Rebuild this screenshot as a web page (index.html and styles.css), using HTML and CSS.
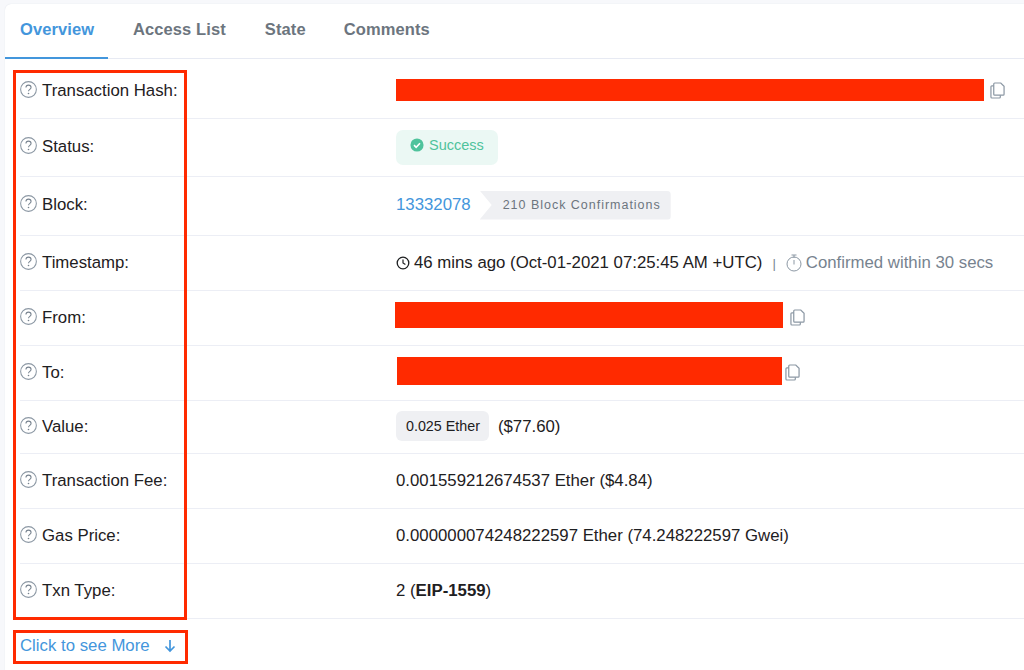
FILE: index.html
```html
<!DOCTYPE html>
<html lang="en">
<head>
<meta charset="utf-8">
<title>Transaction Details</title>
<link rel="stylesheet" href="styles.css">
</head>
<body>
<svg class="defs" width="0" height="0" aria-hidden="true">
  <symbol id="q" viewBox="0 0 16 16">
    <circle cx="8" cy="8" r="7.4" fill="none" stroke="#8c98a4" stroke-width="1"/>
    <path d="M5.6 6.2C5.6 4.8 6.7 3.9 8 3.9s2.4.9 2.4 2.2c0 1.8-2.4 1.8-2.4 3.6" fill="none" stroke="#77838f" stroke-width="1"/>
    <circle cx="8" cy="11.8" r=".75" fill="#77838f"/>
  </symbol>
  <symbol id="copy" viewBox="0 0 16 18">
    <path d="M5 1h6.5L15 4.5V13a1 1 0 0 1-1 1H5a1 1 0 0 1-1-1V2a1 1 0 0 1 1-1Z" fill="none" stroke="#8c98a4" stroke-width="1.3"/>
    <path d="M4 4H2a1 1 0 0 0-1 1v11a1 1 0 0 0 1 1h8a1 1 0 0 0 1-1v-2" fill="none" stroke="#8c98a4" stroke-width="1.3"/>
  </symbol>
</svg>
<main class="card">
  <nav class="tabs">
    <a class="tab active">Overview</a>
    <a class="tab">Access List</a>
    <a class="tab">State</a>
    <a class="tab">Comments</a>
  </nav>
  <section class="rows">
    <div class="row row-hash">
      <div class="label"><svg class="q"><use href="#q"/></svg>Transaction Hash:</div>
      <div class="value"><span class="redact w-hash"></span><svg class="copy c-hash"><use href="#copy"/></svg></div>
    </div>
    <div class="row r58">
      <div class="label"><svg class="q"><use href="#q"/></svg>Status:</div>
      <div class="value"><span class="status">
        <svg class="check" viewBox="0 0 16 16"><circle cx="8" cy="8" r="7.5" fill="#4fc39c"/><path d="M4.6 8.2l2.4 2.4 4.4-4.6" fill="none" stroke="#fff" stroke-width="1.8"/></svg>Success</span></div>
    </div>
    <div class="row r59">
      <div class="label"><svg class="q"><use href="#q"/></svg>Block:</div>
      <div class="value"><a class="link">13332078</a><span class="confirm">210 Block Confirmations</span></div>
    </div>
    <div class="row">
      <div class="label"><svg class="q"><use href="#q"/></svg>Timestamp:</div>
      <div class="value"><svg class="clock" viewBox="0 0 14 14"><circle cx="7" cy="7" r="5.8" fill="none" stroke="#1e2022" stroke-width="1.3"/><path d="M7 3.6V7l2.4 1.6" fill="none" stroke="#1e2022" stroke-width="1.2"/></svg><span>46 mins ago (Oct-01-2021 07:25:45 AM +UTC)</span><span class="sep">|</span><svg class="timer" viewBox="0 0 16 18"><circle cx="8" cy="10" r="7" fill="none" stroke="#8c98a4" stroke-width="1"/><path d="M5.5 1h5M8 1v3M8 6v4.5" fill="none" stroke="#8c98a4" stroke-width="1"/></svg><span class="muted">Confirmed within 30 secs</span></div>
    </div>
    <div class="row">
      <div class="label"><svg class="q"><use href="#q"/></svg>From:</div>
      <div class="value"><span class="redact w-from"></span><svg class="copy c-row"><use href="#copy"/></svg></div>
    </div>
    <div class="row">
      <div class="label"><svg class="q"><use href="#q"/></svg>To:</div>
      <div class="value"><span class="redact w-to"></span><svg class="copy c-to"><use href="#copy"/></svg></div>
    </div>
    <div class="row r53">
      <div class="label"><svg class="q"><use href="#q"/></svg>Value:</div>
      <div class="value"><span class="ether">0.025 Ether</span><span>($77.60)</span></div>
    </div>
    <div class="row">
      <div class="label"><svg class="q"><use href="#q"/></svg>Transaction Fee:</div>
      <div class="value">0.001559212674537 Ether ($4.84)</div>
    </div>
    <div class="row">
      <div class="label"><svg class="q"><use href="#q"/></svg>Gas Price:</div>
      <div class="value">0.000000074248222597 Ether (74.248222597 Gwei)</div>
    </div>
    <div class="row">
      <div class="label"><svg class="q"><use href="#q"/></svg>Txn Type:</div>
      <div class="value"><span>2 (<b>EIP-1559</b>)</span></div>
    </div>
  </section>
  <a class="more">Click to see More<svg class="arrow" viewBox="0 0 12 14"><path d="M6 1v11M1.5 7.5 6 12l4.5-4.5" fill="none" stroke="#4396dc" stroke-width="1.7"/></svg></a>
</main>
<div class="mark mark-rows"></div>
<div class="mark mark-more"></div>
</body>
</html>
```
FILE: styles.css
```css
* { box-sizing: border-box; }
html, body { margin: 0; height: 670px; overflow: hidden; }
body {
  position: relative;
  background: #f7f8fb;
  padding: 4px 0 0 5px;
  font-family: "Liberation Sans", Arial, sans-serif;
  font-size: 16.8px;
  color: #1e2022;
}
.defs { position: absolute; }
.card {
  background: #fff;
  border-radius: 6px 0 0 0;
  height: 666px;
  display: flex;
  flex-direction: column;
  box-shadow: 0 0 1px #d5dae2;
}
.tabs {
  display: flex;
  height: 55px;
  flex: none;
  border-bottom: 1px solid #e7eaf3;
  font-weight: 700;
  font-size: 16.5px;
  color: #6c757e;
}
.tab { padding: 16px 19px 0 15px; letter-spacing: .1px; }
.tab:nth-child(2) { padding-left: 25px; }
.tab:nth-child(3) { padding-left: 20px; }
.tab:nth-child(4) { padding-left: 19px; }
.tab.active {
  color: #4396dc;
  width: 103px;
  border-bottom: 2px solid #4396dc;
  height: 55px;
}
.rows { margin: 1px 0 0 15px; flex: none; }
.row {
  display: grid;
  grid-template-columns: 376px 1fr;
  height: 55px;
  align-items: center;
  border-bottom: 1px solid #eceef5;
}
.row-hash { height: 59px; padding-top: 4px; }
.r59 { height: 59px; padding-bottom: 2px; }
.r58 { height: 58px; padding-bottom: 2px; }
.r53 { height: 53px; }
.label { display: flex; align-items: center; }
.q { width: 17px; height: 17px; margin: 0 5px 3px 0; flex: none; }
.value { display: flex; align-items: center; }
.redact { display: block; background: #ff2a00; }
.w-hash { width: 588px; height: 22px; margin-bottom: 2px; }
.w-from { width: 388px; height: 26px; margin: 0 0 6px -1px; }
.w-to { width: 385px; height: 28px; margin: 0 0 4px 1px; }
.copy { width: 15px; height: 17px; margin-left: 7px; }
.c-hash { margin: 0 0 2px 6px; }
.c-row { margin-bottom: 2px; }
.c-to { margin: 0 0 2px 3px; }
.status {
  display: flex;
  align-items: center;
  width: 102px;
  height: 35px;
  margin-top: 2px;
  padding: 0 0 5px 14px;
  background: #ebf8f4;
  border-radius: 7px;
  color: #4fc39c;
  font-size: 14.5px;
}
.check { width: 14px; height: 14px; margin-right: 5px; }
.link { color: #4396dc; }
.confirm {
  height: 29px;
  margin-left: 9px;
  padding: 0 10px 0 23px;
  display: flex;
  align-items: center;
  background: #eff0f3;
  clip-path: polygon(0 0, 100% 0, 100% 100%, 0 100%, 12px 50%);
  border-radius: 0 4px 4px 0;
  color: #6c757e;
  font-size: 12.5px;
  letter-spacing: .98px;
}
.clock { width: 14px; height: 14px; margin-right: 4px; }
.sep { color: #77838f; margin: 0 10px; font-size: 13px; }
.timer { width: 16px; height: 18px; margin-right: 4px; }
.muted { color: #77838f; }
.ether {
  display: flex;
  align-items: center;
  height: 30px;
  padding: 0 9px 0 10px;
  margin: 0 9px 2px 0;
  background: #eff0f3;
  border-radius: 6px;
  font-size: 14.3px;
}
.more { margin: 17px 0 0 15px; color: #4396dc; display: flex; align-items: center; }
.arrow { width: 12px; height: 14px; margin-left: 14px; }
.mark { position: absolute; border: 3px solid #ff2a00; }
.mark-rows { left: 13px; top: 70px; width: 174px; height: 550px; }
.mark-more { left: 13px; top: 630px; width: 175px; height: 34px; }
```
